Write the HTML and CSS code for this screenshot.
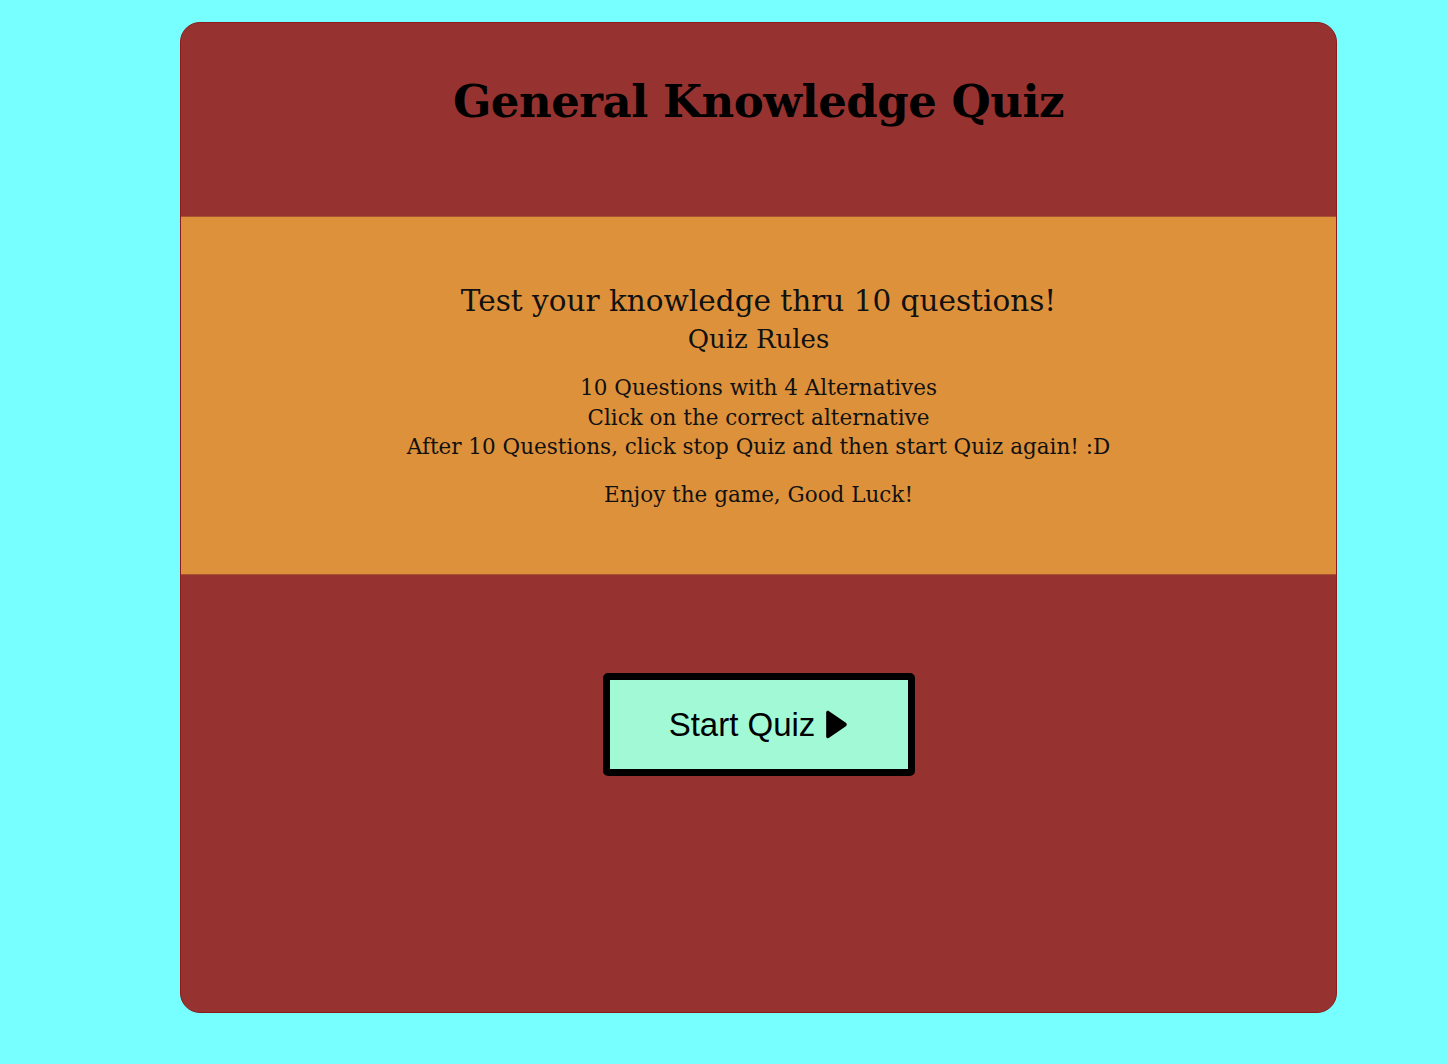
FILE: index.html
```html
<!DOCTYPE html>
<html>
<head>
<meta charset="utf-8">
<link rel="stylesheet" href="styles.css">
</head>
<body>
<main class="card">
  <header class="head">
    <h1 class="title">General Knowledge Quiz</h1>
  </header>
  <section class="intro">
    <h2 class="lead">Test your knowledge thru 10 questions!</h2>
    <h3 class="rules-title">Quiz Rules</h3>
    <p class="rules">10 Questions with 4 Alternatives<br>Click on the correct alternative<br>After 10 Questions, click stop Quiz and then start Quiz again! :D</p>
    <p class="enjoy">Enjoy the game, Good Luck!</p>
  </section>
  <section class="action">
    <button class="start">Start Quiz <svg class="play" viewBox="0 0 24 28" width="24" height="28"><path d="M3 2.5 C3 1 4.5 0.3 5.8 1.1 L22 12.3 C23.2 13.1 23.2 14.9 22 15.7 L5.8 26.9 C4.5 27.7 3 27 3 25.5 Z" fill="#000"/></svg></button>
  </section>
</main>
</body>
</html>
```

FILE: styles.css
```css
html, body {
  margin: 0;
  padding: 0;
}
body {
  background: #77ffff;
  padding: 22px 0 0 180px;
  height: 1064px;
  box-sizing: border-box;
}
.card {
  width: 1157px;
  height: 991px;
  box-sizing: border-box;
  background: #963330;
  border: 1px solid #8c1c1c;
  border-radius: 20px;
  overflow: hidden;
  display: flex;
  flex-direction: column;
}
.head {
  height: 193px;
  flex: none;
  display: flex;
  justify-content: center;
  padding-top: 49px;
  box-sizing: border-box;
}
.title {
  margin: 0;
  font-family: "DejaVu Serif", serif;
  font-weight: bold;
  font-size: 45px;
  letter-spacing: -0.5px;
  line-height: 60px;
  color: #000;
}
.intro {
  height: 359px;
  flex: none;
  background: #de913b;
  border-top: 1px solid #a8522f;
  border-bottom: 1px solid #a8522f;
  box-sizing: border-box;
  text-align: center;
  padding-top: 64px;
  font-family: "DejaVu Serif", serif;
  color: #111;
}
.lead {
  margin: 0;
  font-weight: normal;
  font-size: 29.5px;
  letter-spacing: 0;
  line-height: 40px;
}
.rules-title {
  margin: 0;
  font-weight: normal;
  font-size: 26px;
  letter-spacing: 0;
  line-height: 36px;
}
.rules {
  margin: 16px 0 0;
  font-size: 21.5px;
  letter-spacing: 0;
  line-height: 29.5px;
}
.enjoy {
  margin: 18px 0 0;
  font-size: 21.5px;
  letter-spacing: 0;
  line-height: 29px;
}
.action {
  flex: 1;
  display: flex;
  justify-content: center;
  align-items: flex-start;
  padding-top: 98px;
}
.start {
  width: 312px;
  height: 103px;
  background: #a1fad5;
  border: 7px solid #000;
  border-radius: 5px;
  font-family: "Liberation Sans", Arial, sans-serif;
  font-size: 33px;
  color: #000;
  display: flex;
  align-items: center;
  justify-content: center;
  gap: 8px;
  padding: 0;
}
.play {
  width: 25px;
  height: 29px;
}
```
